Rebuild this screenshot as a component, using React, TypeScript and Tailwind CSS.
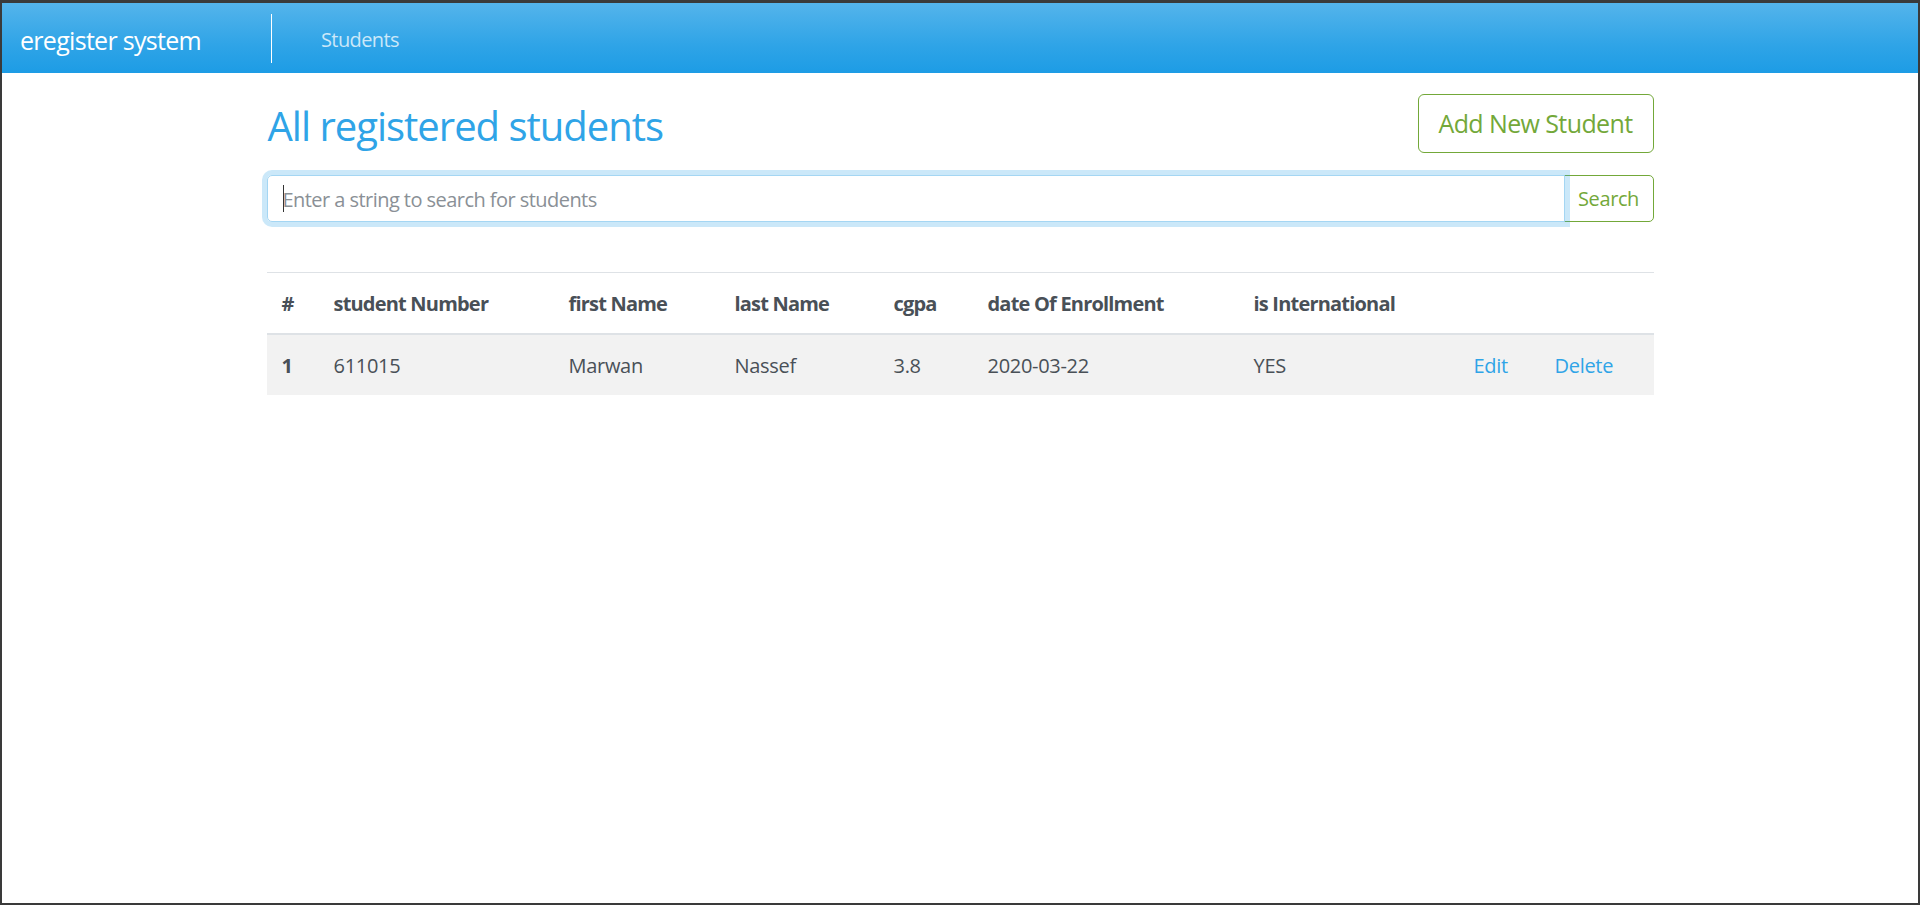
import React from "react";

const font = { fontFamily: '"Open Sans", "Noto Sans", sans-serif' };

export default function App() {
  const cols = [
    { label: "#", w: "w-[52px]" },
    { label: "student Number", w: "w-[235px]" },
    { label: "first Name", w: "w-[166px]" },
    { label: "last Name", w: "w-[159px]" },
    { label: "cgpa", w: "w-[94px]" },
    { label: "date Of Enrollment", w: "w-[266px]" },
    { label: "is International", w: "w-[220px]" },
    { label: "", w: "w-[81px]" },
    { label: "", w: "" },
  ];
  const td = "px-[15px] pt-[16px] pb-[14px] leading-[30px] tracking-[-0.3px]";
  return (
    <div
      className="h-[905px] w-[1920px] box-border border-t-[3px] border-x-2 border-b-2 border-[#3a3a3a] bg-white text-[#495057] overflow-hidden"
      style={font}
    >
      <nav className="h-[70px] flex items-center bg-[linear-gradient(#54b4eb,#2fa4e7_60%,#1d9ce5)] pl-[18px]">
        <span className="text-[25px] text-white leading-none tracking-[-0.7px] pt-[4px]">eregister system</span>
        <div className="ml-[70px] w-px h-[49px] bg-white" />
        <span className="ml-[49px] text-[20px] text-white/75 tracking-[-0.6px] pt-[3px]">Students</span>
      </nav>

      <main className="w-[1387px] mx-auto pt-[21px]">
        <div className="flex items-center justify-between">
          <h2 className="text-[40px] text-[#2fa4e7] leading-[1.2] pl-px pt-[4px] tracking-[-1px]">All registered students</h2>
          <button className="h-[59px] w-[236px] border border-[#73a839] rounded-[6px] text-[25px] text-[#73a839] bg-white tracking-[-0.6px] pt-[1px]">
            Add New Student
          </button>
        </div>

        <div className="flex mt-[22px] h-[47px]">
          <div className="relative flex-1 flex">
            <input
              className="flex-1 h-[47px] border border-[#a4d6f3] rounded-l-[5px] shadow-[0_0_0_5px_rgba(47,164,231,0.25)] px-[15px] pt-[2px] text-[20px] tracking-[-0.55px] outline-none placeholder:text-[#8a9096] relative z-10"
              placeholder="Enter a string to search for students"
              style={font}
            />
            <span className="absolute left-[16px] top-[10px] w-px h-[27px] bg-[#333] z-20" />
          </div>
          <button className="w-[90px] h-[47px] -ml-px border border-[#73a839] rounded-r-[5px] text-[20px] text-[#73a839] bg-white tracking-[-0.4px] pt-[1px]">
            Search
          </button>
        </div>

        <table className="w-full mt-[50px] border-collapse text-[20px]">
          <thead>
            <tr className="border-t border-[#dee2e6]">
              {cols.map((c, i) => (
                <th
                  key={i}
                  className={`${c.w} text-left font-bold px-[15px] pt-[16px] pb-[14px] leading-[30px] tracking-[-0.8px] border-b-2 border-[#dee2e6]`}
                >
                  {c.label}
                </th>
              ))}
            </tr>
          </thead>
          <tbody>
            <tr className="bg-[#f2f2f2]">
              <th className="text-left font-bold px-[15px] pt-[16px] pb-[14px] leading-[30px]">1</th>
              <td className={td}>611015</td>
              <td className={td}>Marwan</td>
              <td className={td}>Nassef</td>
              <td className={td}>3.8</td>
              <td className={td}>2020-03-22</td>
              <td className={td}>YES</td>
              <td className={`${td} text-[#2fa4e7]`}>Edit</td>
              <td className={`${td} text-[#2fa4e7]`}>Delete</td>
            </tr>
          </tbody>
        </table>
      </main>
    </div>
  );
}
